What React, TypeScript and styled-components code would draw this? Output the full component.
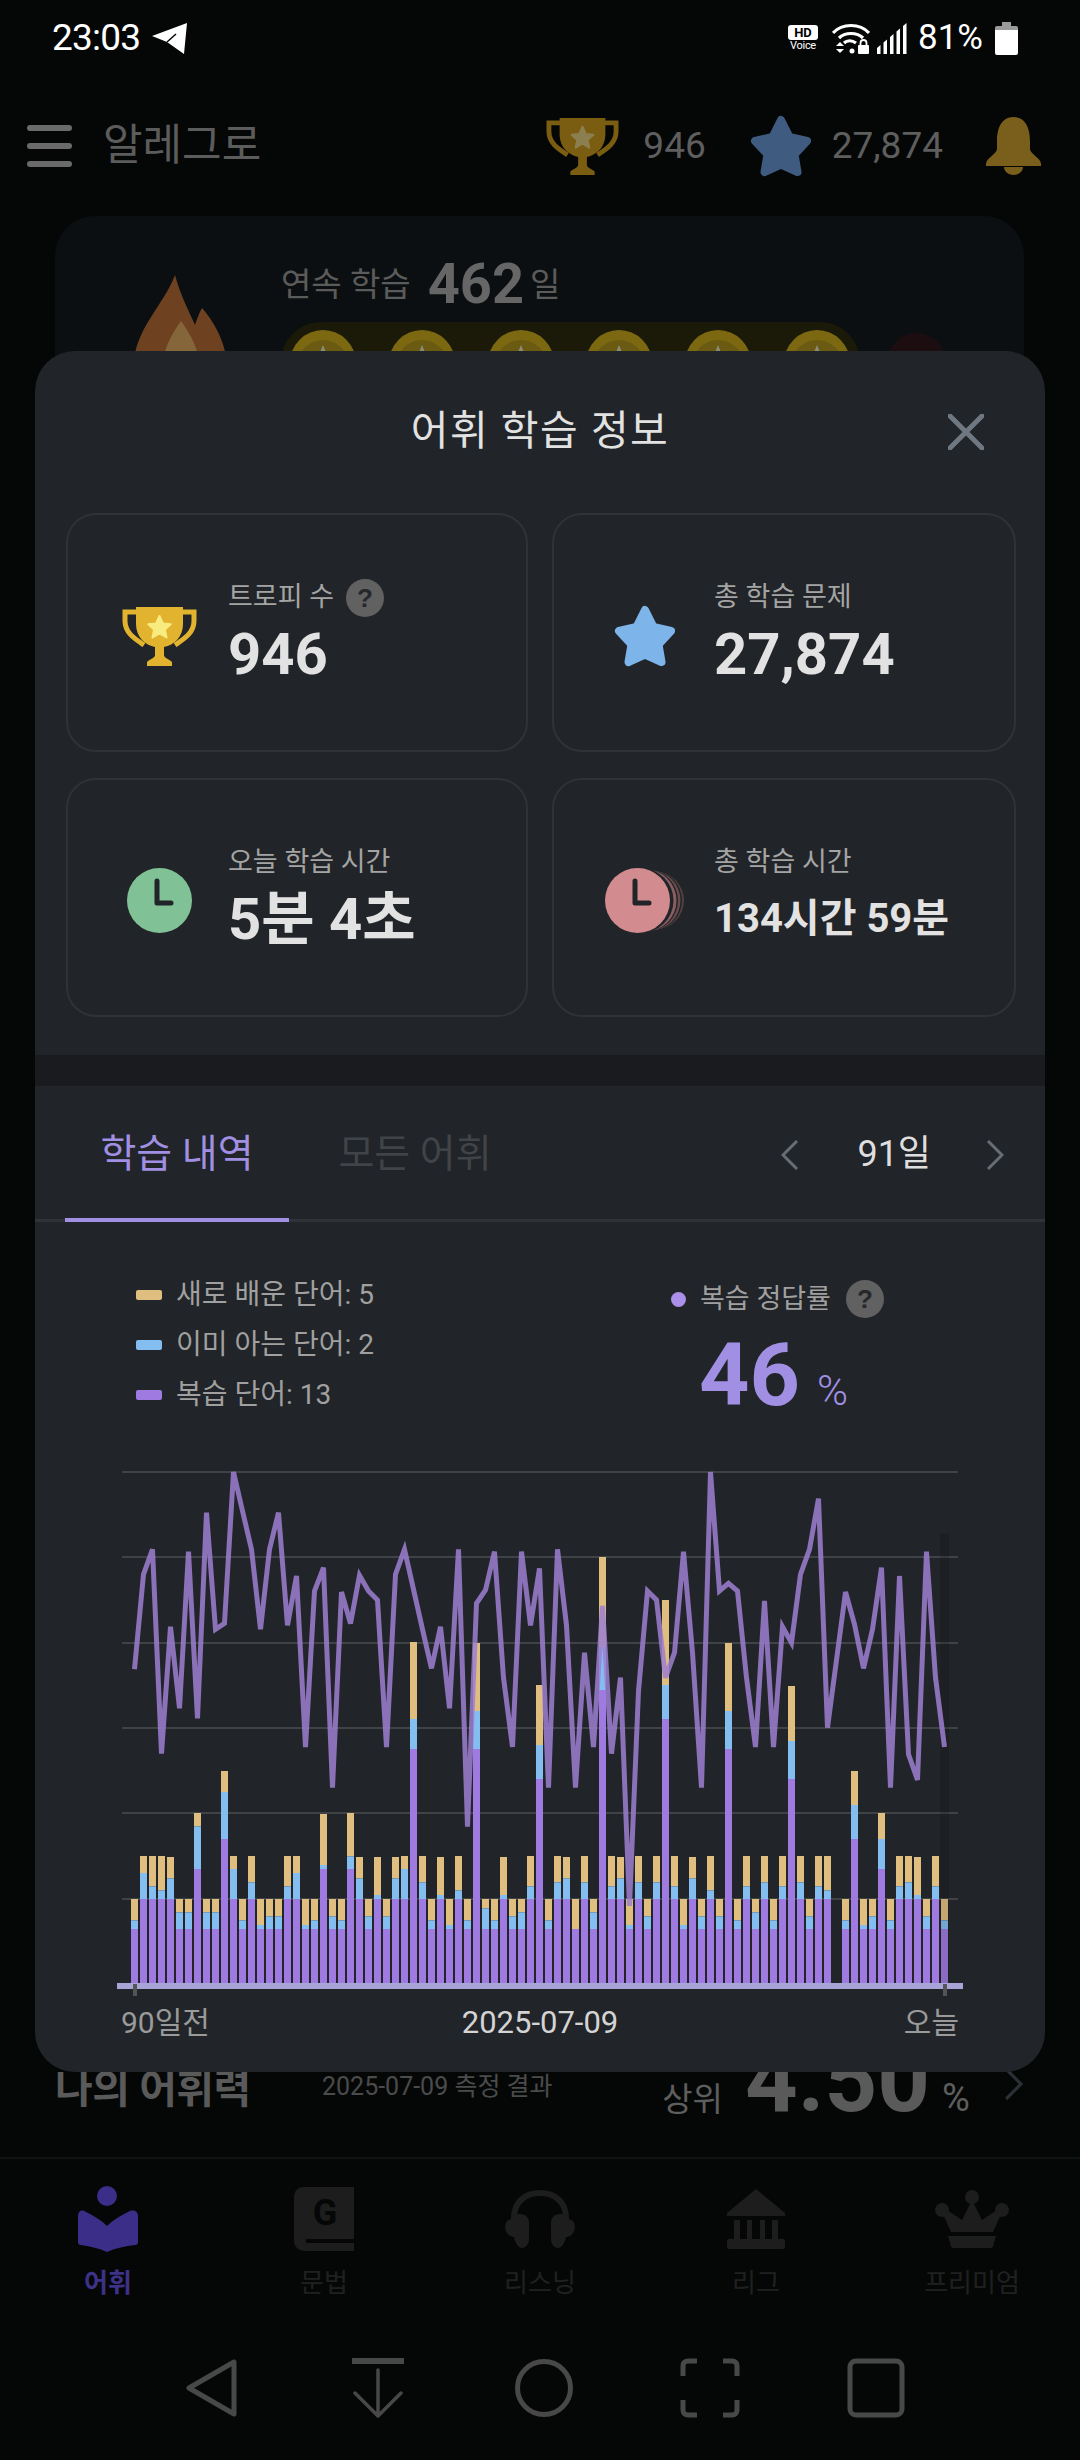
import { ReactNode } from "react";
import styled, { createGlobalStyle } from "styled-components";

const GlobalStyle = createGlobalStyle`
    html, body {
        margin: 0;
        padding: 0;
        background: #050707;
    }
    * {
        box-sizing: border-box;
    }
    body {
        font-family: "Roboto", "Noto Sans CJK KR", sans-serif;
        line-height: 1.2;
    }
`;

const PURPLE = "#9f7ae0";
const SKY = "#84bdf0";
const SAND = "#dfbe80";
const ACCENT = "#a08fe3";

/* bar tops as [sand, sky, purple], read from the chart at 3x; 727 is the base line */
const BASE = 727;
const bars: number[][] = [
    [474, 538, 564], [345, 396, 474], [345, 436, 474], [345, 448, 474], [348, 412, 474],
    [474, 514, 564], [474, 514, 564], [216, 256, 384], [474, 514, 564], [474, 514, 564],
    [90, 153, 294], [345, 384, 474], [474, 538, 564], [345, 424, 474], [474, 552, 564],
    [474, 526, 564], [474, 526, 564], [345, 436, 474], [345, 396, 474], [474, 552, 564],
    [474, 538, 564], [219, 372, 384], [474, 526, 564], [474, 538, 564], [216, 346, 384],
    [348, 412, 474], [474, 526, 564], [348, 462, 474], [474, 526, 564], [348, 412, 474],
    [345, 384, 474], [-297, -66, 24], [345, 424, 474], [474, 538, 564], [348, 462, 474],
    [474, 552, 564], [345, 448, 474], [474, 538, 564], [-294, -90, 24], [474, 502, 564],
    [474, 538, 564], [348, 462, 474], [474, 526, 564], [474, 514, 564], [345, 436, 474],
    [-168, 12, 114], [474, 538, 564], [345, 424, 474], [348, 412, 474], [474, 564, 564],
    [345, 424, 474], [474, 514, 564], [-552, -282, -153], [345, 436, 474], [348, 412, 474],
    [474, 552, 564], [345, 424, 474], [474, 526, 564], [345, 424, 474], [-423, -168, -66],
    [345, 436, 474], [474, 552, 564], [348, 412, 474], [474, 526, 564], [345, 448, 474],
    [474, 526, 564], [-294, -90, 24], [474, 538, 564], [345, 436, 474], [474, 514, 564],
    [345, 424, 474], [474, 538, 564], [345, 436, 474], [-165, 0, 114], [345, 424, 474],
    [474, 526, 564], [345, 436, 474], [345, 448, 474], [727, 727, 727], [474, 538, 564],
    [90, 192, 294], [474, 552, 564], [474, 526, 564], [216, 294, 384], [474, 538, 564],
    [345, 436, 474], [345, 424, 474], [348, 462, 474], [474, 526, 564], [345, 436, 474],
    [474, 538, 564],
];

/* line values at 3x from the top grid line area */
const linePoints = [
    625, 340, 265, 878, 497, 742, 272, 772, 155, 505, 487, 33, 150, 265, 505, 265, 155, 493,
    345, 858, 390, 320, 980, 393, 488, 343, 390, 417, 858, 340, 265, 385, 505, 622, 497, 742,
    265, 1097, 427, 387, 272, 650, 858, 272, 493, 322, 980, 265, 493, 980, 575, 858, 435, 878,
    650, 1335, 690, 390, 417, 650, 575, 272, 575, 980, 33, 390, 367, 390, 650, 858, 420, 858,
    497, 545, 340, 265, 113, 800, 597, 393, 490, 622, 505, 320, 980, 345, 880, 957, 272, 650,
    858,
];

const gridLines = [1471, 1556, 1642, 1727, 1812, 1898];

const Page = styled.div`
    position: relative;
    width: 1080px;
    height: 2460px;
    overflow: hidden;
    display: flex;
    flex-direction: column;
    background: #050707;
`;

const StatusBar = styled.div`
    height: 76px;
    padding: 0 62px 0 52px;
    display: flex;
    align-items: center;
    color: #fff;
`;

const Clock = styled.span`
    font-size: 37px;
    letter-spacing: -0.8px;
    margin-right: 12px;
`;

const StatusRight = styled.div`
    margin-left: auto;
    display: flex;
    align-items: center;
`;

const HdBadge = styled.div`
    width: 30px;
    margin-right: 14px;
    display: flex;
    flex-direction: column;
    align-items: center;
`;

const HdBox = styled.span`
    width: 30px;
    height: 15px;
    border-radius: 3px;
    background: #fff;
    color: #000;
    font-size: 13px;
    font-weight: 700;
    line-height: 15px;
    text-align: center;
`;

const HdVoice = styled.span`
    font-size: 11px;
    line-height: 12px;
    letter-spacing: -0.3px;
`;

const SignalGap = styled.span`
    width: 7px;
`;

const BatteryLevel = styled.span`
    font-size: 35px;
    margin: 0 12px 0 10px;
`;

const Header = styled.header`
    margin-top: 30px;
    height: 80px;
    padding: 0 39px 0 27px;
    display: flex;
    align-items: center;
`;

const Hamburger = styled.div`
    width: 45px;
    height: 42px;
    margin-right: 31px;
    display: flex;
    flex-direction: column;
    justify-content: space-between;

    span {
        height: 6px;
        border-radius: 3px;
        background: #6a6a6a;
    }
`;

const AppName = styled.h1`
    margin: 0;
    font-size: 43px;
    font-weight: 400;
    color: #5c5c5c;
`;

const HeaderStats = styled.div`
    margin-left: auto;
    display: flex;
    align-items: center;
`;

const HeaderCount = styled.span<{ $left: number }>`
    font-size: 37px;
    color: #5e5e5e;
    margin: 0 43px 0 ${p => p.$left}px;
`;

const StreakCard = styled.section`
    margin: 30px 56px 0 55px;
    height: 220px;
    padding: 40px 0 0 79px;
    border-radius: 40px;
    background: #0c0f11;
    display: flex;
    gap: 54px;
`;

const Flame = styled.div`
    width: 93px;
    padding-top: 19px;
`;

const StreakBody = styled.div`
    display: flex;
    flex-direction: column;
`;

const StreakTitle = styled.div`
    height: 58px;
    display: flex;
    align-items: center;
    color: #5b5b5b;
    font-size: 33px;
`;

const StreakNumber = styled.b`
    font-size: 56px;
    color: #666;
    margin: 0 6px 0 17px;
`;

const CoinLine = styled.div`
    margin-top: 8px;
    display: flex;
    gap: 27px;
`;

const CoinRow = styled.div`
    width: 579px;
    height: 100px;
    padding: 8px 10px 0 9px;
    border-radius: 40px;
    background: #1b1a08;
    display: flex;
    justify-content: space-between;
`;

const LockedCoin = styled.span`
    width: 59px;
    height: 59px;
    margin-top: 11px;
    border-radius: 50%;
    background: #1c0d10;
`;

const VocabRow = styled.section`
    margin-top: auto;
    height: 90px;
    padding: 0 57px 0 55px;
    display: flex;
    align-items: flex-end;
`;

const VocabTitle = styled.h2`
    margin: 0 0 11px;
    width: 267px;
    font-size: 41px;
    font-weight: 700;
    line-height: 50px;
    color: #5a5a5a;
    letter-spacing: -0.5px;
`;

const VocabDate = styled.span`
    margin-bottom: 18px;
    font-size: 25px;
    line-height: 40px;
    color: #4b4b4b;
`;

const VocabRank = styled.div`
    margin: 0 0 -20px auto;
    display: flex;
    align-items: baseline;
    color: #5e5e5e;
    font-size: 33px;
    line-height: 90px;
`;

const VocabValue = styled.b`
    margin: 0 12px 0 22px;
    font-size: 92px;
    color: #5a5a5a;
`;

const VocabPercent = styled.span`
    font-size: 38px;
    color: #5e5e5e;
    margin-right: 34px;
`;

const VocabArrow = styled.div`
    margin-bottom: 25px;
    display: flex;
`;

const TabBar = styled.nav`
    margin-top: 32px;
    height: 173px;
    padding-top: 26px;
    border-top: 2px solid #0f1313;
    display: grid;
    grid-template-columns: repeat(5, 1fr);
`;

const TabItem = styled.div<{ $active?: boolean }>`
    display: flex;
    flex-direction: column;
    align-items: center;
    color: ${p => (p.$active ? "#3d3188" : "#202020")};
    font-size: 26px;
    font-weight: ${p => (p.$active ? 700 : 400)};
`;

const TabIcon = styled.div`
    height: 68px;
    display: flex;
    align-items: center;
    justify-content: center;
`;

const TabLabel = styled.span`
    margin-top: 12px;
    line-height: 36px;
`;

const NavBar = styled.div`
    height: 130px;
    padding: 28px 0 0 8px;
    display: flex;
    justify-content: center;
    align-items: flex-start;
`;

const NavButton = styled.div`
    width: 166px;
    display: flex;
    justify-content: center;
`;

const Modal = styled.div`
    position: absolute;
    top: 351px;
    left: 35px;
    width: 1010px;
    height: 1721px;
    border-radius: 40px;
    background: #212428;
    overflow: hidden;
`;

const ModalHead = styled.div`
    height: 162px;
    display: grid;
    grid-template-columns: 1fr auto 1fr;
    align-items: center;
`;

const ModalTitle = styled.h2`
    margin: 0;
    grid-column: 2;
    font-size: 41px;
    font-weight: 400;
    color: #e2e2e2;
    letter-spacing: 1.500px;
`;

const CloseButton = styled.div`
    justify-self: end;
    margin-right: 61px;
    display: flex;
`;

const CardGrid = styled.div`
    padding: 0 29px 38px 31px;
    display: grid;
    grid-template-columns: 462px 464px;
    grid-auto-rows: 239px;
    column-gap: 24px;
    row-gap: 26px;
`;

const InfoCard = styled.div`
    padding: 6px 0 0 44px;
    border: 2px solid #2f3237;
    border-radius: 30px;
    display: flex;
    align-items: center;
`;

const InfoIcon = styled.div`
    width: 94px;
    margin-right: 22px;
    display: flex;
    justify-content: center;
`;

const InfoText = styled.div`
    display: flex;
    flex-direction: column;
`;

const InfoLabel = styled.div`
    height: 36px;
    display: flex;
    align-items: center;
    gap: 12px;
    font-size: 27px;
    color: #a4a4a4;
`;

const InfoValue = styled.div<{ $small?: boolean }>`
    line-height: 76px;
    font-size: ${p => (p.$small ? 40 : 58)}px;
    font-weight: 700;
    color: #e2e2e2;
`;

const HelpDot = styled.span`
    width: 38px;
    height: 38px;
    border-radius: 50%;
    background: #616161;
    color: #26282b;
    font-family: "Liberation Sans", sans-serif;
    font-size: 26px;
    font-weight: 700;
    line-height: 38px;
    text-align: center;
`;

const AccuracyHelp = styled(HelpDot)`
    margin-left: 15px;
`;

const Band = styled.div`
    height: 31px;
    background: #191b1e;
`;

const TabRow = styled.div`
    height: 136px;
    padding: 0 41px 0 30px;
    border-bottom: 3px solid #2f3237;
    display: flex;
    align-items: stretch;
    gap: 14px;
`;

const HistoryTab = styled.div<{ $active?: boolean }>`
    width: 224px;
    margin-bottom: -3px;
    padding-top: 4px;
    display: flex;
    align-items: center;
    justify-content: center;
    font-size: 39px;
    color: ${p => (p.$active ? ACCENT : "#404347")};
    border-bottom: 4px solid ${p => (p.$active ? ACCENT : "transparent")};
`;

const RangePicker = styled.div`
    margin-left: auto;
    padding-top: 4px;
    display: flex;
    align-items: center;
    gap: 58px;
    font-size: 36px;
    color: #dedede;
`;

const RangeLabel = styled.span`
    margin: 0 -3px 0 0;
`;

const Stats = styled.div`
    height: 239px;
    padding: 48px 0 0 101px;
    display: flex;
`;

const Legend = styled.ul`
    width: 535px;
    margin: 0;
    padding: 0;
    list-style: none;
`;

const LegendRow = styled.li`
    height: 50px;
    display: flex;
    align-items: center;
    gap: 14px;
    font-size: 28px;
    color: #a0a0a0;
`;

const Swatch = styled.span<{ $color: string }>`
    width: 26px;
    height: 10px;
    border-radius: 2px;
    background: ${p => p.$color};
`;

const Accuracy = styled.div`
    padding-top: 9px;
`;

const AccuracyLabel = styled.div`
    height: 40px;
    display: flex;
    align-items: center;
    font-size: 27px;
    color: #a0a0a0;
`;

const AccuracyDot = styled.span`
    width: 15px;
    height: 15px;
    margin-right: 14px;
    border-radius: 50%;
    background: #ab8fe8;
`;

const AccuracyValue = styled.div`
    margin: 16px 0 0 28px;
    display: flex;
    align-items: baseline;
    gap: 17px;
    color: ${ACCENT};
`;

const AccuracyNumber = styled.b`
    font-size: 88px;
    line-height: 80px;
`;

const AccuracyPercent = styled.span`
    font-size: 42px;
    font-weight: 300;
`;

const Chart = styled.svg`
    display: block;
`;

const AxisLabels = styled.div`
    height: 44px;
    padding: 0 86px;
    display: grid;
    grid-template-columns: 1fr auto 1fr;
    align-items: center;
    font-size: 30px;
    color: #9a9a9a;
`;

const AxisDate = styled.span`
    font-size: 31px;
    color: #d4d4d4;
`;

const AxisEnd = styled.span`
    justify-self: end;
`;

const Trophy = ({ cup, star, width }: { cup: string; star: string; width: number }) => (
    <svg width={width} height={width * 0.8} viewBox="0 0 75 60">
        <path d="M15 6H3v9c0 12 10 18 19 24M60 6h12v9c0 12-10 18-19 24" fill="none" stroke={cup} strokeWidth="5" />
        <path d="M14 1h47v17c0 13-9 21-19 23v8c0 3 5 4 8 7v4H25v-4c3-3 8-4 8-7v-8C23 39 14 31 14 18z" fill={cup} />
        <path d="M37.5 10l3.4 7.4 7.8.9-5.8 5.3 1.6 7.9-7-4-7 4 1.6-7.9-5.8-5.3 7.8-.9z" fill={star} stroke={star} strokeWidth="2" strokeLinejoin="round" />
    </svg>
);

const Star = ({ color, width }: { color: string; width: number }) => (
    <svg width={width} height={width} viewBox="0 0 64 64">
        <path d="M32 6l8.5 17 17.500 4-12.500 13.500 3 17.500-16.500-7.500-16.500 7.500 3-17.500L6 27l17.500-4z" fill={color} stroke={color} strokeWidth="8" strokeLinejoin="round" />
    </svg>
);

const ClockIcon = ({ color }: { color: string }) => (
    <svg width="65" height="65" viewBox="0 0 65 65">
        <circle cx="32.500" cy="32.500" r="32.500" fill={color} />
        <path d="M30 13v22h14" fill="none" stroke="#212428" strokeWidth="5" strokeLinecap="round" strokeLinejoin="round" />
    </svg>
);

const StackedClock = () => (
    <svg width="80" height="65" viewBox="0 0 80 65">
        <circle cx="50" cy="32.500" r="29" fill="#55403f" />
        <circle cx="47" cy="32.500" r="30" fill="#212428" />
        <circle cx="45.500" cy="32.500" r="30" fill="#6a4d4f" />
        <circle cx="42" cy="32.500" r="31" fill="#212428" />
        <circle cx="40.500" cy="32.500" r="31" fill="#8a5f62" />
        <circle cx="36" cy="32.500" r="32.500" fill="#212428" />
        <circle cx="32.500" cy="32.500" r="32.500" fill="#d28b8f" />
        <path d="M30 13v22h14" fill="none" stroke="#212428" strokeWidth="5" strokeLinecap="round" strokeLinejoin="round" />
    </svg>
);

const Chevron = ({ right, color, size }: { right?: boolean; color: string; size: number }) => (
    <svg width={size * 0.6} height={size} viewBox="0 0 18 30">
        <path d={right ? "M2 1l14 14L2 29" : "M16 1L2 15l14 14"} fill="none" stroke={color} strokeWidth="3" />
    </svg>
);

const Bell = () => (
    <svg width="55" height="58" viewBox="0 0 55 58">
        <path d="M27.500 0C40 0 44 12 44 24v8c0 5 11 9 11 15v2H0v-2c0-6 11-10 11-15v-8C11 12 15 0 27.500 0z" fill="#7a5f1c" />
        <path d="M18 50h19c0 4-4 8-9.500 8S18 54 18 50z" fill="#7a5f1c" />
    </svg>
);

const FlameIcon = () => (
    <svg width="93" height="130" viewBox="0 0 93 130">
        <path d="M41 0c6 22 14 36 20 50 2-6 4-12 7-17 14 16 25 38 25 60 0 20-18 37-46 37S0 113 0 90C0 55 30 30 41 0z" fill="#6e4220" />
        <path d="M47 46c10 14 19 30 19 50v34H28V96c0-20 9-36 19-50z" fill="#85663a" />
    </svg>
);

const Coin = () => (
    <svg width="66" height="66" viewBox="0 0 66 66">
        <circle cx="33" cy="33" r="33" fill="#7d6812" />
        <circle cx="33" cy="36" r="26" fill="#6b5a12" />
        <path d="M33 15l6 15H27z" fill="#8c8c7c" />
    </svg>
);

const PaperPlane = () => (
    <svg width="36" height="32" viewBox="0 0 36 32">
        <path d="M35 1L32 32 15 20 0 14z" fill="#fff" />
        <path d="M15 20l9-8" stroke="#050707" strokeWidth="1.500" />
    </svg>
);

const WifiLock = () => (
    <svg width="38" height="32" viewBox="0 0 38 32">
        <path d="M1 11C10 1 28 1 37 11M7 16c6-6 18-6 24 0M12 21c3-3 8-3 12 0" fill="none" stroke="#fff" strokeWidth="3.200" />
        <path d="M4 24l4-4 4 4zM4 27h8l-4 4z" fill="#fff" />
        <circle cx="20" cy="29" r="2.500" fill="#fff" />
        <rect x="26" y="23" width="11" height="9" rx="1" fill="#fff" />
        <path d="M28.500 24v-3a3 3 0 0 1 6 0v3" fill="none" stroke="#fff" strokeWidth="1.800" />
    </svg>
);

const Signal = () => (
    <svg width="31" height="32" viewBox="0 0 31 32">
        {[0, 1, 2, 3, 4].map(i => (
            <path key={i} d={`M${i * 6.500} 32V${26 - i * 5.500}l3.500 -3V32z`} fill="#fff" />
        ))}
    </svg>
);

const BatteryIcon = () => (
    <svg width="23" height="33" viewBox="0 0 23 33">
        <rect x="7" y="0" width="9" height="6" fill="#9a9a9a" />
        <rect x="0" y="4" width="23" height="6" rx="2" fill="#9a9a9a" />
        <path d="M0 8h23v23a2 2 0 0 1-2 2H2a2 2 0 0 1-2-2z" fill="#fff" />
    </svg>
);

const BookPerson = () => (
    <svg width="60" height="66" viewBox="0 0 60 66" fill="#3b2e88">
        <ellipse cx="29" cy="10" rx="10" ry="10" />
        <path d="M0 30c0-5 4-7 8-4 8 4 15 8 21 14 6-6 13-10 21-14 5-3 10-1 10 4v26c0 2-1 3-3 3-10 1-19 3-28 7-9-4-18-6-26-7-2 0-3-1-3-3z" />
    </svg>
);

const GrammarBook = () => (
    <svg width="60" height="64" viewBox="0 0 60 64">
        <path d="M10 0h50v64H12C5 64 0 60 0 54V10C0 4 4 0 10 0z" fill="#1d1d1d" />
        <path d="M12 52h48v4H12z" fill="#050707" />
        <text x="31" y="38" fontSize="36" fontWeight="700" fontFamily="Roboto" textAnchor="middle" fill="#050707">G</text>
    </svg>
);

const Headphones = () => (
    <svg width="70" height="58" viewBox="0 0 70 58" fill="#1d1d1d">
        <path d="M9 30V28C9 12 20 3 35 3s26 9 26 25v2" fill="none" stroke="#1d1d1d" strokeWidth="6" />
        <path d="M15 24c6 0 9 4 9 9v16c0 5-3 9-7 9-4 0-7-6-8-11-5 0-9-5-9-10s3-8 8-8c1-3 3-5 7-5zM55 24c-6 0-9 4-9 9v16c0 5 3 9 7 9 4 0 7-6 8-11 5 0 9-5 9-10s-3-8-8-8c-1-3-3-5-7-5z" />
    </svg>
);

const Bank = () => (
    <svg width="58" height="60" viewBox="0 0 58 60" fill="#1d1d1d">
        <path d="M29 0l29 24v3H0v-3z" />
        <path d="M7 31h6v19H7zM20 31h5v19h-5zM33 31h5v19h-5zM45 31h6v19h-6z" />
        <rect y="50" width="58" height="10" rx="2" />
    </svg>
);

const Crown = () => (
    <svg width="74" height="58" viewBox="0 0 74 58" fill="#1d1d1d">
        <circle cx="37" cy="7" r="7" />
        <circle cx="7" cy="20" r="7" />
        <circle cx="67" cy="20" r="7" />
        <path d="M37 10l10 20 15-10 5 2-9 20H16L7 22l5-2 15 10z" />
        <path d="M13 46h48l-3 10c0 1-1 2-3 2H19c-2 0-3-1-3-2z" />
    </svg>
);

const navStroke = { fill: "none", stroke: "#484848", strokeWidth: 5, strokeLinejoin: "round", strokeLinecap: "round" } as const;

const NavIcon = ({ children, width }: { children: ReactNode; width: number }) => (
    <svg width={width} height="60" viewBox={`0 0 ${width} 60`} {...navStroke}>
        {children}
    </svg>
);

const TrendChart = () => (
    <Chart width="1010" height="540" viewBox="35 1460 1010 540">
        {gridLines.map(y => (
            <line key={y} x1="122" x2="958" y1={y} y2={y} stroke="#3f4346" strokeWidth="2" />
        ))}
        {bars.map(([sand, sky, purple], i) => {
            const x = 131 + i * 9;
            const top = (v: number) => 1740 + v / 3;
            return (
                <g key={i}>
                    <rect x={x} width="7" y={top(sand)} height={(sky - sand) / 3} fill={SAND} />
                    <rect x={x} width="7" y={top(sky)} height={(purple - sky) / 3} fill={SKY} />
                    <rect x={x} width="7" y={top(purple)} height={(BASE - purple) / 3} fill={PURPLE} />
                </g>
            );
        })}
        <rect x="940" y="1532" width="9" height="450" fill="#000" opacity="0.12" />
        <rect x="117" y="1982" width="846" height="6" fill="#a8a4d8" />
        <rect x="133" y="1983" width="4" height="12" fill="#555" />
        <rect x="943" y="1983" width="4" height="12" fill="#555" />
        <polyline
            points={linePoints.map((v, i) => `${134.5 + i * 9},${1460 + v / 3}`).join(" ")}
            fill="none"
            stroke="#9c7fd1"
            strokeOpacity="0.85"
            strokeWidth="5"
        />
    </Chart>
);

const App = () => (
    <Page>
        <GlobalStyle />
        <StatusBar>
            <Clock>23:03</Clock>
            <PaperPlane />
            <StatusRight>
                <HdBadge>
                    <HdBox>HD</HdBox>
                    <HdVoice>Voice</HdVoice>
                </HdBadge>
                <WifiLock />
                <SignalGap />
                <Signal />
                <BatteryLevel>81%</BatteryLevel>
                <BatteryIcon />
            </StatusRight>
        </StatusBar>

        <Header>
            <Hamburger>
                <span />
                <span />
                <span />
            </Hamburger>
            <AppName>알레그로</AppName>
            <HeaderStats>
                <Trophy cup="#7a5d10" star="#8c7f50" width={73} />
                <HeaderCount $left={24}>946</HeaderCount>
                <Star color="#3f5c80" width={64} />
                <HeaderCount $left={19}>27,874</HeaderCount>
                <Bell />
            </HeaderStats>
        </Header>

        <StreakCard>
            <Flame>
                <FlameIcon />
            </Flame>
            <StreakBody>
                <StreakTitle>
                    연속 학습
                    <StreakNumber>462</StreakNumber>일
                </StreakTitle>
                <CoinLine>
                    <CoinRow>
                        {[0, 1, 2, 3, 4, 5].map(i => (
                            <Coin key={i} />
                        ))}
                    </CoinRow>
                    <LockedCoin />
                </CoinLine>
            </StreakBody>
        </StreakCard>

        <VocabRow>
            <VocabTitle>나의 어휘력</VocabTitle>
            <VocabDate>2025-07-09 측정 결과</VocabDate>
            <VocabRank>
                상위
                <VocabValue>4.50</VocabValue>
                <VocabPercent>%</VocabPercent>
            </VocabRank>
            <VocabArrow>
                <Chevron right color="#2a3036" size={32} />
            </VocabArrow>
        </VocabRow>

        <TabBar>
            <TabItem $active>
                <TabIcon><BookPerson /></TabIcon>
                <TabLabel>어휘</TabLabel>
            </TabItem>
            <TabItem>
                <TabIcon><GrammarBook /></TabIcon>
                <TabLabel>문법</TabLabel>
            </TabItem>
            <TabItem>
                <TabIcon><Headphones /></TabIcon>
                <TabLabel>리스닝</TabLabel>
            </TabItem>
            <TabItem>
                <TabIcon><Bank /></TabIcon>
                <TabLabel>리그</TabLabel>
            </TabItem>
            <TabItem>
                <TabIcon><Crown /></TabIcon>
                <TabLabel>프리미엄</TabLabel>
            </TabItem>
        </TabBar>

        <NavBar>
            <NavButton>
                <NavIcon width={54}>
                    <path d="M49 4v52L4 30z" />
                </NavIcon>
            </NavButton>
            <NavButton>
                <NavIcon width={54}>
                    <path d="M1 3h52" strokeLinecap="butt" strokeWidth="6" />
                    <path d="M27 12v46M4 35l23 23 23-23" strokeWidth="3.500" />
                </NavIcon>
            </NavButton>
            <NavButton>
                <NavIcon width={58}>
                    <circle cx="29" cy="30" r="26.500" />
                </NavIcon>
            </NavButton>
            <NavButton>
                <NavIcon width={60}>
                    <path d="M3 18V8c0-3 2-5 5-5h9M43 3h9c3 0 5 2 5 5v10M57 42v10c0 3-2 5-5 5h-9M17 57H8c-3 0-5-2-5-5V42" strokeLinecap="butt" />
                </NavIcon>
            </NavButton>
            <NavButton>
                <NavIcon width={58}>
                    <rect x="3" y="3" width="52" height="54" rx="6" />
                </NavIcon>
            </NavButton>
        </NavBar>

        <Modal>
            <ModalHead>
                <ModalTitle>어휘 학습 정보</ModalTitle>
                <CloseButton>
                    <svg width="36" height="36" viewBox="0 0 36 36">
                        <path d="M2 2l32 32M34 2L2 34" stroke="#6f7880" strokeWidth="5" strokeLinecap="round" />
                    </svg>
                </CloseButton>
            </ModalHead>

            <CardGrid>
                <InfoCard>
                    <InfoIcon>
                        <Trophy cup="#e2b32f" star="#f8ec80" width={75} />
                    </InfoIcon>
                    <InfoText>
                        <InfoLabel>
                            트로피 수<HelpDot>?</HelpDot>
                        </InfoLabel>
                        <InfoValue>946</InfoValue>
                    </InfoText>
                </InfoCard>
                <InfoCard>
                    <InfoIcon>
                        <Star color="#7db5ea" width={64} />
                    </InfoIcon>
                    <InfoText>
                        <InfoLabel>총 학습 문제</InfoLabel>
                        <InfoValue>27,874</InfoValue>
                    </InfoText>
                </InfoCard>
                <InfoCard>
                    <InfoIcon>
                        <ClockIcon color="#80c295" />
                    </InfoIcon>
                    <InfoText>
                        <InfoLabel>오늘 학습 시간</InfoLabel>
                        <InfoValue>5분 4초</InfoValue>
                    </InfoText>
                </InfoCard>
                <InfoCard>
                    <InfoIcon>
                        <StackedClock />
                    </InfoIcon>
                    <InfoText>
                        <InfoLabel>총 학습 시간</InfoLabel>
                        <InfoValue $small>134시간 59분</InfoValue>
                    </InfoText>
                </InfoCard>
            </CardGrid>

            <Band />

            <TabRow>
                <HistoryTab $active>학습 내역</HistoryTab>
                <HistoryTab>모든 어휘</HistoryTab>
                <RangePicker>
                    <Chevron color="#666d73" size={30} />
                    <RangeLabel>91일</RangeLabel>
                    <Chevron right color="#666d73" size={30} />
                </RangePicker>
            </TabRow>

            <Stats>
                <Legend>
                    <LegendRow>
                        <Swatch $color={SAND} />
                        새로 배운 단어: 5
                    </LegendRow>
                    <LegendRow>
                        <Swatch $color={SKY} />
                        이미 아는 단어: 2
                    </LegendRow>
                    <LegendRow>
                        <Swatch $color={PURPLE} />
                        복습 단어: 13
                    </LegendRow>
                </Legend>
                <Accuracy>
                    <AccuracyLabel>
                        <AccuracyDot />
                        복습 정답률
                        <AccuracyHelp>?</AccuracyHelp>
                    </AccuracyLabel>
                    <AccuracyValue>
                        <AccuracyNumber>46</AccuracyNumber>
                        <AccuracyPercent>%</AccuracyPercent>
                    </AccuracyValue>
                </Accuracy>
            </Stats>

            <TrendChart />

            <AxisLabels>
                <span>90일전</span>
                <AxisDate>2025-07-09</AxisDate>
                <AxisEnd>오늘</AxisEnd>
            </AxisLabels>
        </Modal>
    </Page>
);

export default App;
